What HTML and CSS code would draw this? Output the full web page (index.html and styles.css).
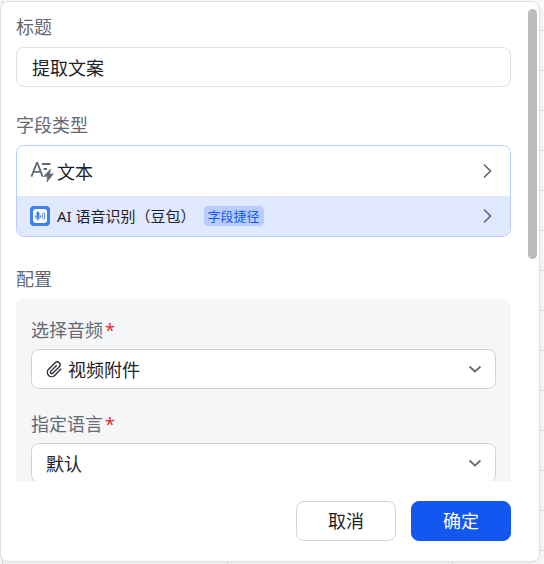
FILE: index.html
```html
<!DOCTYPE html>
<html lang="zh-CN">
<head>
    <meta charset="UTF-8">
    <meta name="viewport" content="width=device-width, initial-scale=1.0">
    <title>提取文案</title>
    <link rel="stylesheet" href="styles.css">
</head>
<body>
    <form class="panel">
        <div class="panel-body">
            <!-- Title -->
            <div class="field">
                <label class="field-label" for="title">标题</label>
                <input class="text-input" type="text" id="title" value="提取文案">
            </div>

            <!-- Field type -->
            <div class="field">
                <span class="field-label" id="typeLabel">字段类型</span>
                <div class="type-box" role="group" aria-labelledby="typeLabel">
                    <button class="type-row" type="button">
                        <svg class="icon-text" viewBox="0 0 24 24" width="24" height="24" fill="none" stroke="#646a73" stroke-width="1.8">
                            <path d="M1.4 17.6L6.8 4h.6l5.2 13.6M3.4 12.8h7.4"/>
                            <path d="M12 5h8.4M13.6 10h3.4"/>
                            <path d="M20.4 10l-6.8 7.6h3.8l-.6 5.4 6.6-8h-3.6z" fill="#646a73" stroke="#646a73" stroke-width=".6"/>
                        </svg>
                        <span class="type-name">文本</span>
                        <svg class="arrow" viewBox="0 0 16 16" width="16" height="16"><path d="M5 1.5L11.5 8 5 14.5"/></svg>
                    </button>
                    <button class="type-row type-row-active" type="button">
                        <svg class="icon-voice" viewBox="0 0 20 20" width="20" height="20">
                            <rect width="20" height="20" rx="4" fill="#3b82f0"/>
                            <rect x="3" y="3" width="14" height="14" rx="3" fill="#fff"/>
                            <rect x="6.4" y="5.6" width="3" height="6.4" rx="1.5" fill="#3b82f0"/>
                            <path d="M5.2 9.4c0 4.8 5.4 4.8 5.4 0M7.9 12.6v2M11.8 7.4q1.4 2.4 0 5M13.8 6q2.2 3.8 0 7.8" fill="none" stroke="#3b82f0" stroke-width="1"/>
                        </svg>
                        <span class="type-desc">AI 语音识别（豆包）</span>
                        <span class="tag">字段捷径</span>
                        <svg class="arrow" viewBox="0 0 16 16" width="16" height="16"><path d="M5 1.5L11.5 8 5 14.5"/></svg>
                    </button>
                </div>
            </div>

            <!-- Config -->
            <div class="field">
                <span class="field-label">配置</span>
                <div class="config">
                    <div class="config-item">
                        <label class="field-label" for="audio">选择音频<span class="required">*</span></label>
                        <div class="select-wrap">
                            <svg class="clip" viewBox="0 0 24 24" width="17" height="17">
                                <path d="M21.4 11.1l-9.2 9.2a6 6 0 0 1-8.5-8.5l9.2-9.2a4 4 0 0 1 5.7 5.7l-9.2 9.1a2 2 0 0 1-2.8-2.8l8.5-8.5"/>
                            </svg>
                            <select class="select select-icon" id="audio">
                                <option>视频附件</option>
                            </select>
                            <svg class="chevron" viewBox="0 0 14 14" width="14" height="14"><path d="M1.5 4.5L7 9.5l5.5-5"/></svg>
                        </div>
                    </div>
                    <div class="config-item">
                        <label class="field-label" for="language">指定语言<span class="required">*</span></label>
                        <div class="select-wrap">
                            <select class="select" id="language">
                                <option>默认</option>
                            </select>
                            <svg class="chevron" viewBox="0 0 14 14" width="14" height="14"><path d="M1.5 4.5L7 9.5l5.5-5"/></svg>
                        </div>
                    </div>
                </div>
            </div>
        </div>

        <div class="panel-footer">
            <button class="btn" type="button">取消</button>
            <button class="btn btn-primary" type="submit">确定</button>
        </div>
        <div class="scroll-thumb"></div>
    </form>
</body>
</html>
```
FILE: styles.css
```css
* {
    box-sizing: border-box;
}

body {
    margin: 0;
    height: 100vh;
    padding: 1px 4px 2px 0;
    font-family: "Noto Sans CJK SC", sans-serif;
    font-size: 18px;
    color: #1f2329;
    /* table grid behind the panel */
    background-color: #fafafb;
    background-image:
        linear-gradient(#dee0e3, #dee0e3),
        linear-gradient(to right, #dee0e3 1px, transparent 1px),
        linear-gradient(#dee0e3 1px, transparent 1px);
    background-size: 1px 100%, 225px 100%, 100% 40px;
    background-position: 2px 0, 2px 0, 0 30px;
    background-repeat: no-repeat, repeat, repeat;
}

input, select, button {
    font: inherit;
    color: inherit;
}

.panel {
    position: relative;
    display: flex;
    flex-direction: column;
    height: 100%;
    background: #fff;
    border: 1px solid #dee0e3;
    border-radius: 8px;
    box-shadow: 0 4px 10px rgba(31, 35, 41, 0.08);
}

.panel-body {
    flex: 1;
    min-height: 0;
    overflow: hidden;
    padding: 13px 28px 0 15px;
}

.field {
    margin-bottom: 26px;
}

.field-label {
    display: block;
    height: 24px;
    line-height: 22px;
    margin-bottom: 8px;
    color: #646a73;
}

.text-input {
    display: block;
    width: 100%;
    height: 40px;
    padding: 0 15px;
    border: 1px solid #dee0e3;
    border-radius: 8px;
    background: #fff;
}

.type-box {
    margin-bottom: 30px;
    border: 1px solid #bacefd;
    border-radius: 8px;
    overflow: hidden;
}

.type-row {
    display: flex;
    align-items: center;
    width: 100%;
    height: 50px;
    padding: 0 15px 0 13px;
    border: none;
    background: #fff;
    text-align: left;
}

.type-row-active {
    height: 40px;
    background: #e0e9ff;
    font-size: 15px;
}

.icon-text {
    margin-right: 3px;
}

.icon-voice {
    margin-right: 7px;
}

.type-desc {
    line-height: 20px;
    font-family: "Noto Sans", "Noto Sans CJK SC", sans-serif;
}

.tag {
    height: 20px;
    line-height: 20px;
    margin-left: 8px;
    padding: 0 4px;
    border-radius: 4px;
    background: #bacefd;
    color: #1456f0;
    font-size: 13px;
}

.arrow {
    margin-left: auto;
    fill: none;
    stroke: #646a73;
    stroke-width: 1.7;
}

.config {
    padding: 19px 15px;
    border-radius: 8px;
    background: #f5f6f7;
}

.config-item {
    margin-bottom: 23px;
}

.config .field-label {
    margin-bottom: 7px;
}

.required {
    margin-left: 2px;
    color: #e22e28;
    font-family: "Noto Sans", sans-serif;
}

.select-wrap {
    position: relative;
}

.select {
    display: block;
    width: 100%;
    height: 40px;
    padding: 0 36px 0 14px;
    border: 1px solid #d0d3d6;
    border-radius: 8px;
    background: #fff;
    appearance: none;
}

.select-icon {
    padding-left: 36px;
}

.clip, .chevron {
    position: absolute;
    top: 0;
    bottom: 0;
    margin: auto 0;
    fill: none;
    pointer-events: none;
}

.clip {
    left: 15px;
    stroke: #2b2f36;
    stroke-width: 2;
}

.chevron {
    right: 14px;
    stroke: #646a73;
    stroke-width: 1.7;
}

.panel-footer {
    display: flex;
    justify-content: flex-end;
    gap: 15px;
    padding: 20px 28px;
}

.btn {
    width: 100px;
    height: 40px;
    padding: 0 0 2px;
    border: 1px solid #d0d3d6;
    border-radius: 8px;
    background: #fff;
}

.btn-primary {
    border-color: #1456f0;
    background: #1456f0;
    color: #fff;
}

.scroll-thumb {
    position: absolute;
    top: 7px;
    right: 2px;
    width: 9px;
    height: 250px;
    border-radius: 5px;
    background: #bbbcbe;
}
```
